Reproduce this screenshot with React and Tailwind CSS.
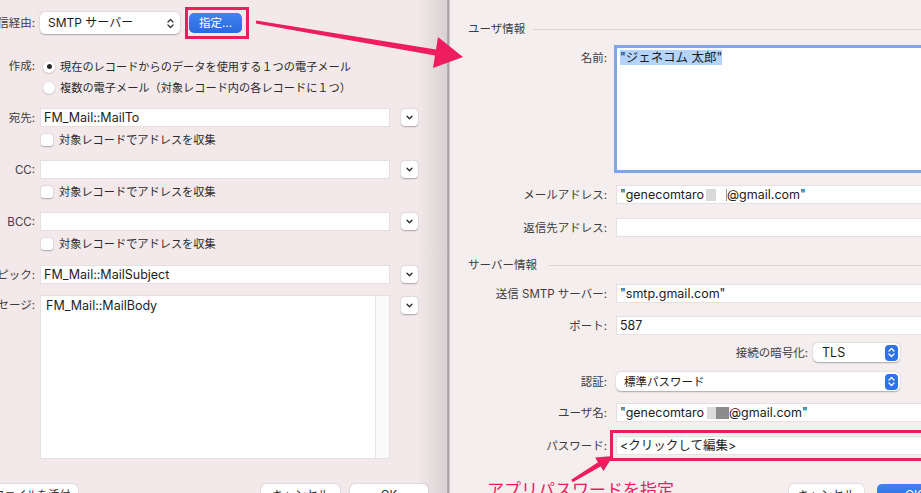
import React from "react";

function UpDown() {
  return (
    <svg width="7" height="11" viewBox="0 0 7 11" fill="none" stroke="currentColor" strokeWidth="1.3" strokeLinecap="round" strokeLinejoin="round">
      <path d="M1 4 L3.5 1.5 L6 4" />
      <path d="M1 7 L3.5 9.5 L6 7" />
    </svg>
  );
}

function BlueStepper() {
  return (
    <span className="flex h-[16px] w-[13px] items-center justify-center rounded-[4px] bg-[#2f72e6] text-white">
      <UpDown />
    </span>
  );
}

function MenuButton({ className = "" }) {
  return (
    <div className={"ml-[11px] flex h-[17px] w-[17px] shrink-0 items-center justify-center rounded-[4px] bg-white shadow-[0_0.5px_1.5px_rgba(0,0,0,0.3)] " + className}>
      <svg width="7" height="5" viewBox="0 0 7 5" fill="none" stroke="#333" strokeWidth="1.4" strokeLinecap="round" strokeLinejoin="round">
        <path d="M1 1.2 L3.5 3.8 L6 1.2" />
      </svg>
    </div>
  );
}

function LLabel({ children, className = "" }) {
  return (
    <div className={"flex w-[35px] shrink-0 justify-end whitespace-nowrap text-[11.5px] text-[#3d3d3d] " + className}>
      <span>{children}</span>
    </div>
  );
}

function LField({ children }) {
  return (
    <div className="ml-[5px] flex h-[19px] w-[350px] items-center border border-[#e6dfe0] bg-white px-[3px] text-[12.5px] text-[#1d1d1d]">
      {children}
    </div>
  );
}

function Check({ children }) {
  return (
    <div className="ml-[41px] mt-[5px] flex h-[16px] items-center">
      <span className="h-[12px] w-[12px] rounded-[3px] bg-white shadow-[0_0.5px_1.5px_rgba(0,0,0,0.3)]" />
      <span className="ml-[6px] text-[11.2px] text-[#2b2b2b]">{children}</span>
    </div>
  );
}

function Radio({ on, children }) {
  return (
    <div className="flex h-[21px] items-center">
      <span className="ml-[43px] flex h-[12px] w-[12px] items-center justify-center rounded-full bg-white shadow-[0_0.5px_1.5px_rgba(0,0,0,0.3)]">
        {on && <span className="h-[5px] w-[5px] rounded-full bg-[#2a2a2a]" />}
      </span>
      <span className="ml-[5px] whitespace-nowrap text-[11.2px] text-[#2b2b2b]">{children}</span>
    </div>
  );
}

function PlainButton({ children, className = "" }) {
  return (
    <div className={"flex h-[22px] items-center justify-center rounded-[5px] bg-white text-[11.5px] text-[#2b2b2b] shadow-[0_0.5px_1.5px_rgba(0,0,0,0.3)] " + className}>
      {children}
    </div>
  );
}

function RLabel({ children, className = "" }) {
  return (
    <div className={"w-[157px] shrink-0 whitespace-nowrap text-right text-[11.5px] text-[#3d3d3d] " + className}>
      {children}
    </div>
  );
}

function RField({ children }) {
  return (
    <div className="ml-[9px] flex h-[19px] flex-1 items-center whitespace-nowrap border border-[#e6e0e0] bg-white px-[3px] text-[12.5px] text-[#1c1c1c]">
      {children}
    </div>
  );
}

function SectionHead({ children, lineClass }) {
  return (
    <div className="flex h-[16px] items-center pl-[18px]">
      <span className="whitespace-nowrap text-[11.5px] text-[#3d3d3d]">{children}</span>
      <div className={"h-px flex-1 bg-[#dcd5d5] " + lineClass} />
    </div>
  );
}

export default function App() {
  return (
    <div className="relative flex h-[493px] w-[921px] overflow-hidden font-[family-name:Inter,'Noto_Sans_CJK_JP',sans-serif] leading-[16px]">
      {/* Mail send options sheet */}
      <div className="flex w-[447px] shrink-0 flex-col bg-[linear-gradient(to_right,#f3e9eb_calc(100%-30px),#d8d0d2)] pt-[12px]">
        <div className="flex h-[22px] items-center">
          <LLabel>送信経由:</LLabel>
          <div className="ml-[5px] flex h-[22px] w-[140px] items-center justify-between rounded-[5px] bg-white pl-[8px] pr-[6px] text-[12px] text-[#1d1d1d] shadow-[0_0.5px_1.5px_rgba(0,0,0,0.3)]">
            <span>SMTP サーバー</span>
            <span className="text-[#333]"><UpDown /></span>
          </div>
          <div className="ml-[5px] flex h-[32px] w-[64px] items-center border-[3px] border-[#ea1d5f] pl-px">
            <div className="flex h-[20px] w-[53px] items-center justify-center rounded-[5px] bg-[linear-gradient(#3f83f0,#2a69de)] text-[11.5px] text-white">
              指定...
            </div>
          </div>
        </div>

        <div className="mt-[10px] h-px bg-[#dcd3d5]" />

        <div className="relative mt-[12px]">
          <div className="absolute left-0 top-[2px]">
            <LLabel>作成:</LLabel>
          </div>
          <Radio on>現在のレコードからのデータを使用する１つの電子メール</Radio>
          <Radio>複数の電子メール（対象レコード内の各レコードに１つ）</Radio>
        </div>

        <div className="mt-[10px] flex items-center">
          <LLabel>宛先:</LLabel>
          <LField>FM_Mail::MailTo</LField>
          <MenuButton />
        </div>
        <Check>対象レコードでアドレスを収集</Check>

        <div className="mt-[12px] flex items-center">
          <LLabel>CC:</LLabel>
          <LField />
          <MenuButton />
        </div>
        <Check>対象レコードでアドレスを収集</Check>

        <div className="mt-[12px] flex items-center">
          <LLabel>BCC:</LLabel>
          <LField />
          <MenuButton />
        </div>
        <Check>対象レコードでアドレスを収集</Check>

        <div className="mt-[13px] flex items-center">
          <LLabel>トピック:</LLabel>
          <LField>FM_Mail::MailSubject</LField>
          <MenuButton />
        </div>

        <div className="mt-[11px] flex items-start">
          <LLabel className="mt-[2px]">メッセージ:</LLabel>
          <div className="ml-[5px] flex h-[164px] w-[350px] border border-[#e6dfe0] bg-white">
            <div className="flex-1 px-[5px] pt-[2px] text-[12.5px] text-[#1d1d1d]">FM_Mail::MailBody</div>
            <div className="w-[14px] border-l border-[#ebe7e7] bg-[#fbfafa]" />
          </div>
          <MenuButton className="mt-[2px]" />
        </div>

        <div className="mt-[25px] flex items-start pr-[19px]">
          <PlainButton className="ml-[-14px] w-[92px] text-[11px]">ファイルを添付</PlainButton>
          <PlainButton className="ml-auto w-[79px]">キャンセル</PlainButton>
          <PlainButton className="ml-[10px] w-[78px]">OK</PlainButton>
        </div>
      </div>

      <div className="w-[3px] shrink-0 bg-[linear-gradient(to_right,#b2b0b2,#a6a4a6_66%,#e9e3e3)]" />

      {/* Account settings sheet */}
      <div className="min-w-0 flex-1 bg-[#f4eeee]">
        <div className="flex w-[510px] flex-col pt-[21px]">
          <SectionHead lineClass="ml-[8px]">ユーザ情報</SectionHead>

          <div className="mt-[8px] flex items-start">
            <RLabel className="mt-[5px]">名前:</RLabel>
            <div className="ml-[7px] h-[128px] flex-1 border-[3px] border-[#7ea7e4] bg-white pl-[3px] pt-[2px] text-[12.5px] text-[#1c1c1c]">
              <span className="bg-[#b4d4fb]">"ジェネコム 太郎"</span>
            </div>
          </div>

          <div className="mt-[12px] flex items-center">
            <RLabel>メールアドレス:</RLabel>
            <RField>
              <span>"genecomtaro</span>
              <span className="ml-[2px] inline-block h-[12px] w-[10px] bg-[#dadada]" />
              <span className="ml-[10px] inline-block h-[12px] w-px bg-[#9a9a9a]" />
              <span>@gmail.com"</span>
            </RField>
          </div>

          <div className="mt-[14px] flex items-center">
            <RLabel>返信先アドレス:</RLabel>
            <RField />
          </div>

          <div className="mt-[20px]">
            <SectionHead lineClass="ml-[11px]">サーバー情報</SectionHead>
          </div>

          <div className="mt-[11px] flex items-center">
            <RLabel>送信 SMTP サーバー:</RLabel>
            <RField>"smtp.gmail.com"</RField>
          </div>

          <div className="mt-[13px] flex items-center">
            <RLabel>ポート:</RLabel>
            <RField>587</RField>
          </div>

          <div className="mt-[8px] flex items-center">
            <div className="w-[157px] shrink-0" />
            <div className="ml-[9px] flex w-[284px] items-center justify-end">
              <span className="whitespace-nowrap text-[11.5px] text-[#3d3d3d]">接続の暗号化:</span>
              <div className="ml-[5px] flex h-[19px] w-[87px] items-center justify-between rounded-[5px] bg-white pl-[9px] pr-[2px] text-[12.5px] text-[#1c1c1c] shadow-[0_0.5px_1.5px_rgba(0,0,0,0.3)]">
                <span>TLS</span>
                <BlueStepper />
              </div>
            </div>
          </div>

          <div className="mt-[10px] flex items-center">
            <RLabel>認証:</RLabel>
            <div className="ml-[9px] flex h-[19px] w-[284px] items-center justify-between rounded-[5px] bg-white pl-[8px] pr-[2px] text-[11.5px] text-[#1c1c1c] shadow-[0_0.5px_1.5px_rgba(0,0,0,0.3)]">
              <span>標準パスワード</span>
              <BlueStepper />
            </div>
          </div>

          <div className="mt-[12px] flex items-center">
            <RLabel>ユーザ名:</RLabel>
            <RField>
              <span>"genecomtaro</span>
              <span className="ml-[3px] inline-block h-[12px] w-[9px] bg-[#dcdcdc]" />
              <span className="inline-block h-[12px] w-[13px] bg-[#8c8c8c]" />
              <span>@gmail.com"</span>
            </RField>
          </div>

          <div className="mt-[8px] flex items-center">
            <RLabel>パスワード:</RLabel>
            <div className="ml-[3px] flex-1 border-[3px] border-[#ea1d5f] p-[3px]">
              <div className="flex h-[19px] items-center border border-[#e6e0e0] bg-white px-[3px] text-[12.5px] text-[#1c1c1c]">
                &lt;クリックして編集&gt;
              </div>
            </div>
          </div>

          <div className="mt-[19px] flex items-start pl-[37px] pr-[10px]">
            <span className="whitespace-nowrap text-[17px] leading-[20px] text-[#ec1c5e]">アプリパスワードを指定</span>
            <PlainButton className="ml-auto mt-[4px] w-[75px]">キャンセル</PlainButton>
            <div className="ml-[13px] mt-[4px] flex h-[22px] w-[73px] items-center justify-center rounded-[5px] bg-[linear-gradient(#3f83f0,#2a69de)] text-[11.5px] text-white">
              OK
            </div>
          </div>
        </div>
      </div>

      {/* Annotation arrows */}
      <svg className="pointer-events-none absolute left-0 top-0" width="921" height="493" viewBox="0 0 921 493">
        <polygon
          fill="#ee1c60"
          points="256.25,20.5 436,49.5 438,37 463,57 433,68 435,55.5 255.75,23.5"
        />
        <polygon
          fill="#ee1c60"
          points="571.2,479.7 598,462.2 595.1,457.5 613,456 603.5,471.1 600.6,466.4 572.8,482.3"
        />
      </svg>
    </div>
  );
}
